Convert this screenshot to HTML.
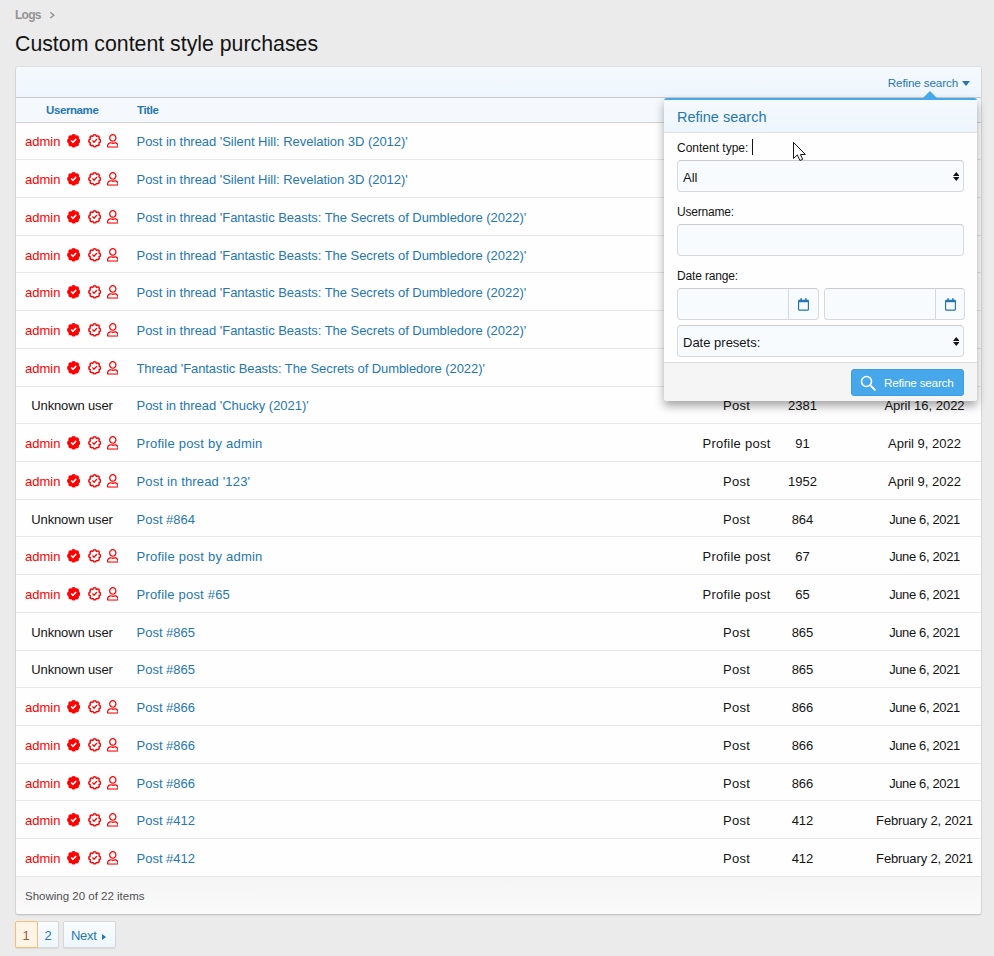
<!DOCTYPE html>
<html lang="en"><head><meta charset="utf-8"><title>Custom content style purchases</title>
<style>
*{box-sizing:border-box}
html,body{margin:0;padding:0}
body{width:994px;height:956px;overflow:hidden;background:#ebebeb;font-family:"Liberation Sans",sans-serif;font-size:14px;color:#141414;position:relative}
a{color:#2577b1;text-decoration:none}
.crumb{position:absolute;left:15px;top:7px;font-size:12px;font-weight:bold;color:#939393;line-height:16px;white-space:nowrap;letter-spacing:-.75px}
.crumb i{font-style:normal;font-weight:normal;margin-left:7px;font-size:13px}
h1{position:absolute;left:15px;top:29px;margin:0;font-size:21.3px;font-weight:normal;line-height:30px;white-space:nowrap;color:#141414}
.block{position:absolute;left:15px;top:66px;width:967px;height:849px;background:#fefefe;border:1px solid #d6d6d6;border-top-color:#dedede;border-bottom-color:#c8c8c8;border-radius:4px;overflow:hidden;box-shadow:0 1px 1px rgba(0,0,0,.07)}
.fbar{height:31px;background:linear-gradient(#f5f9fd,#edf6fd);border-bottom:1px solid #cbcbcb;position:relative}
.fbar a{position:absolute;right:11px;top:8px;font-size:11.7px;letter-spacing:-.15px;line-height:15px;white-space:nowrap}
.fbar a b{display:inline-block;width:0;height:0;border:4px solid transparent;border-top:5px solid #2577b1;border-bottom:0;margin-left:4px;vertical-align:1px}
.hdr{height:25px;background:#f5f9fd;border-bottom:1px solid #d2d2d2;position:relative;font-size:11.5px;font-weight:bold;color:#2577b1;line-height:24px;letter-spacing:-.4px}
.hdr span{position:absolute;top:0}
.rows{height:754px;display:flex;flex-direction:column}
.r{height:38px;display:flex;align-items:center;border-bottom:1px solid #e7e7e7;font-size:13px;white-space:nowrap;min-height:0}
.r:nth-child(1),.r:nth-child(4),.r:nth-child(8),.r:nth-child(11),.r:nth-child(15),.r:nth-child(18){height:37px}
.r:nth-child(4)>div,.r:nth-child(11)>div,.r:nth-child(18)>div{top:2px}
.r>div{line-height:18px;position:relative;top:1px}
.u{width:112px;text-align:center}
.u.a{color:#f00;text-align:left;padding-left:9px}
.ic{width:13.3px;height:13.8px;vertical-align:-2px}
.i1{margin-left:6.6px}.i2{margin-left:7.6px}.i3{margin-left:5.5px;width:11.6px}
.t{flex:1;padding-left:8.5px}
.c3{width:87px;text-align:center;letter-spacing:.25px}
.c4{width:45px;text-align:center}
.c5{width:156px;text-align:center;padding-left:43px}
.foot{height:37px;background:linear-gradient(#f5f5f5,#fafafa);font-size:11.5px;color:#505050;line-height:38px;padding-left:9px}
.pn{position:absolute;top:921px;height:27px;box-shadow:0 1px 1px rgba(0,0,0,.08);white-space:nowrap;border:1px solid #d8d8d8;border-radius:2px;background:linear-gradient(#fafcfe,#edf6fd);font-size:13px;line-height:27px;text-align:center;color:#2577b1}
.pn.cur{background:#fff4e5;border-color:#f5be75;color:#9a5a36;z-index:2}
.pn i{display:inline-block;width:0;height:0;border:3px solid transparent;border-left:4px solid #2577b1;border-right:0;margin-left:5.5px;vertical-align:0px}
.menu{position:absolute;left:664px;top:98px;width:313px;height:303px;background:#fefefe;border-top:2px solid #47a7eb;border-radius:3px;box-shadow:0 5px 10px 0 rgba(0,0,0,.35)}
.menu:before{content:"";position:absolute;left:259px;top:-9px;border:7px solid transparent;border-top:0;border-bottom:7px solid #47a7eb}
.mh{height:33px;background:linear-gradient(#f5f9fd,#edf6fd);border-bottom:1px solid #dfdfdf;color:#2577b1;font-size:14.5px;line-height:34px;padding-left:13px}
.lbl{position:absolute;left:13px;font-size:12px;line-height:16px;white-space:nowrap}
.inp{position:absolute;background:#f7fbfe;border:1px solid #d8d8d8;border-top-color:#cbcbcb;border-radius:4px;font-size:13px;line-height:30px;padding:2px 0 0 5px;overflow:hidden}
.inp svg.s{position:absolute;right:3.7px;top:10.5px;width:6.5px;height:9px}
.add{position:absolute;right:0;top:0;bottom:0;width:30px;border-left:1px solid #d8d8d8}
.add svg{position:absolute;left:9px;top:9px;width:11px;height:13px}
.mf{position:absolute;left:0;right:0;top:262px;height:39px;background:#f5f5f5;border-top:1px solid #dfdfdf;border-radius:0 0 3px 3px}
.btn{position:absolute;left:187px;top:6px;width:113px;height:27px;background:#47a7eb;border:1px solid #3b9de3;border-radius:3px;color:#fff;font-size:11.7px;letter-spacing:-.2px;line-height:25px;padding-left:32px;white-space:nowrap}
.btn svg{position:absolute;left:8px;top:5px;width:16px;height:16px}
</style></head><body>
<svg width="0" height="0" style="position:absolute"><defs>
<symbol id="bs" viewBox="0 0 512 512" preserveAspectRatio="none"><g fill="#f00"><circle cx="256" cy="256" r="180"/><circle cx="256.0" cy="88.0" r="88"/><circle cx="374.8" cy="137.2" r="88"/><circle cx="424.0" cy="256.0" r="88"/><circle cx="374.8" cy="374.8" r="88"/><circle cx="256.0" cy="424.0" r="88"/><circle cx="137.2" cy="374.8" r="88"/><circle cx="88.0" cy="256.0" r="88"/><circle cx="137.2" cy="137.2" r="88"/></g><path fill="#fff" d="M367.2 211.75L236.16 341.74c-4.31 4.28-11.28 4.25-15.55-.06l-75.72-76.33c-4.28-4.31-4.25-11.28.06-15.56l26.03-25.82c4.31-4.28 11.28-4.25 15.56.06l42.15 42.49 97.2-96.42c4.31-4.28 11.28-4.25 15.55.06l25.82 26.03c4.28 4.32 4.26 11.29-.06 15.56z"/></symbol>
<symbol id="br" viewBox="0 0 512 512" preserveAspectRatio="none"><g fill="#f00"><circle cx="256" cy="256" r="180"/><circle cx="256.0" cy="88.0" r="88"/><circle cx="374.8" cy="137.2" r="88"/><circle cx="424.0" cy="256.0" r="88"/><circle cx="374.8" cy="374.8" r="88"/><circle cx="256.0" cy="424.0" r="88"/><circle cx="137.2" cy="374.8" r="88"/><circle cx="88.0" cy="256.0" r="88"/><circle cx="137.2" cy="137.2" r="88"/></g><g fill="#fefefe"><circle cx="256" cy="256" r="154"/><circle cx="256.0" cy="100.0" r="41"/><circle cx="366.3" cy="145.7" r="41"/><circle cx="412.0" cy="256.0" r="41"/><circle cx="366.3" cy="366.3" r="41"/><circle cx="256.0" cy="412.0" r="41"/><circle cx="145.7" cy="366.3" r="41"/><circle cx="100.0" cy="256.0" r="41"/><circle cx="145.7" cy="145.7" r="41"/></g><path fill="#f00" transform="translate(256 256) scale(.88) translate(-256 -256)" d="M367.2 211.75L236.16 341.74c-4.31 4.28-11.28 4.25-15.55-.06l-75.72-76.33c-4.28-4.31-4.25-11.28.06-15.56l26.03-25.82c4.31-4.28 11.28-4.25 15.56.06l42.15 42.49 97.2-96.42c4.31-4.28 11.28-4.25 15.55.06l25.82 26.03c4.28 4.32 4.26 11.29-.06 15.56z"/></symbol>
<symbol id="ur" viewBox="0 0 448 512" preserveAspectRatio="none"><path fill="#f00" d="M313.6 304c-28.7 0-42.500 16-89.600 16-47.100 0-60.800-16-89.600-16C60.200 304 0 364.200 0 438.400V464c0 26.500 21.500 48 48 48h352c26.500 0 48-21.500 48-48v-25.600c0-74.200-60.200-134.400-134.400-134.400zM400 464H48v-25.600c0-47.600 38.800-86.400 86.400-86.400 14.600 0 38.300 16 89.600 16 51.700 0 74.900-16 89.600-16 47.600 0 86.400 38.800 86.400 86.400V464zM224 288c79.500 0 144-64.500 144-144S303.500 0 224 0 80 64.500 80 144s64.500 144 144 144zm0-240c52.900 0 96 43.100 96 96s-43.100 96-96 96-96-43.100-96-96 43.100-96 96-96z"/></symbol>
<symbol id="cal" viewBox="0 0 448 512"><path fill="#2577b1" d="M400 64h-48V12c0-6.600-5.400-12-12-12h-40c-6.600 0-12 5.400-12 12v52H160V12c0-6.600-5.400-12-12-12h-40c-6.600 0-12 5.400-12 12v52H48C21.500 64 0 85.500 0 112v352c0 26.500 21.500 48 48 48h352c26.500 0 48-21.500 48-48V112c0-26.500-21.500-48-48-48zm-6 400H54c-3.300 0-6-2.700-6-6V160h352v298c0 3.300-2.700 6-6 6z"/></symbol>
<symbol id="sort" viewBox="0 0 6.5 9"><path fill="#141414" d="M3.250 0L6.500 3.900H0zM0 5.100H6.500L3.250 9z"/></symbol>
</defs></svg>
<div class="crumb">Logs</div><svg style="position:absolute;left:48px;top:10px" width="8" height="10" viewBox="0 0 8 10"><path d="M2.200 2.200L5.900 5.150L2.200 8.100" fill="none" stroke="#909090" stroke-width="1.300"/></svg>
<h1>Custom content style purchases</h1>
<div class="block">
<div class="fbar"><a>Refine search<b></b></a></div>
<div class="hdr"><span style="left:30px">Username</span><span style="left:121px">Title</span></div>
<div class="rows">
<div class="r"><div class="u a"><span class="adm">admin</span><svg class="ic i1"><use href="#bs"/></svg><svg class="ic i2"><use href="#br"/></svg><svg class="ic i3"><use href="#ur"/></svg></div><div class="t"><a style="letter-spacing:-0.036px">Post in thread 'Silent Hill: Revelation 3D (2012)'</a></div><div class="c3"></div><div class="c4"></div><div class="c5"></div></div>
<div class="r"><div class="u a"><span class="adm">admin</span><svg class="ic i1"><use href="#bs"/></svg><svg class="ic i2"><use href="#br"/></svg><svg class="ic i3"><use href="#ur"/></svg></div><div class="t"><a style="letter-spacing:-0.036px">Post in thread 'Silent Hill: Revelation 3D (2012)'</a></div><div class="c3"></div><div class="c4"></div><div class="c5"></div></div>
<div class="r"><div class="u a"><span class="adm">admin</span><svg class="ic i1"><use href="#bs"/></svg><svg class="ic i2"><use href="#br"/></svg><svg class="ic i3"><use href="#ur"/></svg></div><div class="t"><a style="letter-spacing:-0.036px">Post in thread 'Fantastic Beasts: The Secrets of Dumbledore (2022)'</a></div><div class="c3"></div><div class="c4"></div><div class="c5"></div></div>
<div class="r"><div class="u a"><span class="adm">admin</span><svg class="ic i1"><use href="#bs"/></svg><svg class="ic i2"><use href="#br"/></svg><svg class="ic i3"><use href="#ur"/></svg></div><div class="t"><a style="letter-spacing:-0.036px">Post in thread 'Fantastic Beasts: The Secrets of Dumbledore (2022)'</a></div><div class="c3"></div><div class="c4"></div><div class="c5"></div></div>
<div class="r"><div class="u a"><span class="adm">admin</span><svg class="ic i1"><use href="#bs"/></svg><svg class="ic i2"><use href="#br"/></svg><svg class="ic i3"><use href="#ur"/></svg></div><div class="t"><a style="letter-spacing:-0.036px">Post in thread 'Fantastic Beasts: The Secrets of Dumbledore (2022)'</a></div><div class="c3"></div><div class="c4"></div><div class="c5"></div></div>
<div class="r"><div class="u a"><span class="adm">admin</span><svg class="ic i1"><use href="#bs"/></svg><svg class="ic i2"><use href="#br"/></svg><svg class="ic i3"><use href="#ur"/></svg></div><div class="t"><a style="letter-spacing:-0.036px">Post in thread 'Fantastic Beasts: The Secrets of Dumbledore (2022)'</a></div><div class="c3"></div><div class="c4"></div><div class="c5"></div></div>
<div class="r"><div class="u a"><span class="adm">admin</span><svg class="ic i1"><use href="#bs"/></svg><svg class="ic i2"><use href="#br"/></svg><svg class="ic i3"><use href="#ur"/></svg></div><div class="t"><a style="letter-spacing:-0.08px">Thread 'Fantastic Beasts: The Secrets of Dumbledore (2022)'</a></div><div class="c3"></div><div class="c4"></div><div class="c5"></div></div>
<div class="r"><div class="u"><span style="letter-spacing:-.15px">Unknown user</span></div><div class="t"><a style="letter-spacing:-0.04px">Post in thread 'Chucky (2021)'</a></div><div class="c3">Post</div><div class="c4">2381</div><div class="c5">April 16, 2022</div></div>
<div class="r"><div class="u a"><span class="adm">admin</span><svg class="ic i1"><use href="#bs"/></svg><svg class="ic i2"><use href="#br"/></svg><svg class="ic i3"><use href="#ur"/></svg></div><div class="t"><a style="letter-spacing:0.22px">Profile post by admin</a></div><div class="c3">Profile post</div><div class="c4">91</div><div class="c5">April 9, 2022</div></div>
<div class="r"><div class="u a"><span class="adm">admin</span><svg class="ic i1"><use href="#bs"/></svg><svg class="ic i2"><use href="#br"/></svg><svg class="ic i3"><use href="#ur"/></svg></div><div class="t"><a style="letter-spacing:0.16px">Post in thread '123'</a></div><div class="c3">Post</div><div class="c4">1952</div><div class="c5">April 9, 2022</div></div>
<div class="r"><div class="u"><span style="letter-spacing:-.15px">Unknown user</span></div><div class="t"><a>Post #864</a></div><div class="c3">Post</div><div class="c4">864</div><div class="c5" style="letter-spacing:-0.37px">June 6, 2021</div></div>
<div class="r"><div class="u a"><span class="adm">admin</span><svg class="ic i1"><use href="#bs"/></svg><svg class="ic i2"><use href="#br"/></svg><svg class="ic i3"><use href="#ur"/></svg></div><div class="t"><a style="letter-spacing:0.22px">Profile post by admin</a></div><div class="c3">Profile post</div><div class="c4">67</div><div class="c5" style="letter-spacing:-0.37px">June 6, 2021</div></div>
<div class="r"><div class="u a"><span class="adm">admin</span><svg class="ic i1"><use href="#bs"/></svg><svg class="ic i2"><use href="#br"/></svg><svg class="ic i3"><use href="#ur"/></svg></div><div class="t"><a style="letter-spacing:0.2px">Profile post #65</a></div><div class="c3">Profile post</div><div class="c4">65</div><div class="c5" style="letter-spacing:-0.37px">June 6, 2021</div></div>
<div class="r"><div class="u"><span style="letter-spacing:-.15px">Unknown user</span></div><div class="t"><a>Post #865</a></div><div class="c3">Post</div><div class="c4">865</div><div class="c5" style="letter-spacing:-0.37px">June 6, 2021</div></div>
<div class="r"><div class="u"><span style="letter-spacing:-.15px">Unknown user</span></div><div class="t"><a>Post #865</a></div><div class="c3">Post</div><div class="c4">865</div><div class="c5" style="letter-spacing:-0.37px">June 6, 2021</div></div>
<div class="r"><div class="u a"><span class="adm">admin</span><svg class="ic i1"><use href="#bs"/></svg><svg class="ic i2"><use href="#br"/></svg><svg class="ic i3"><use href="#ur"/></svg></div><div class="t"><a>Post #866</a></div><div class="c3">Post</div><div class="c4">866</div><div class="c5" style="letter-spacing:-0.37px">June 6, 2021</div></div>
<div class="r"><div class="u a"><span class="adm">admin</span><svg class="ic i1"><use href="#bs"/></svg><svg class="ic i2"><use href="#br"/></svg><svg class="ic i3"><use href="#ur"/></svg></div><div class="t"><a>Post #866</a></div><div class="c3">Post</div><div class="c4">866</div><div class="c5" style="letter-spacing:-0.37px">June 6, 2021</div></div>
<div class="r"><div class="u a"><span class="adm">admin</span><svg class="ic i1"><use href="#bs"/></svg><svg class="ic i2"><use href="#br"/></svg><svg class="ic i3"><use href="#ur"/></svg></div><div class="t"><a>Post #866</a></div><div class="c3">Post</div><div class="c4">866</div><div class="c5" style="letter-spacing:-0.37px">June 6, 2021</div></div>
<div class="r"><div class="u a"><span class="adm">admin</span><svg class="ic i1"><use href="#bs"/></svg><svg class="ic i2"><use href="#br"/></svg><svg class="ic i3"><use href="#ur"/></svg></div><div class="t"><a>Post #412</a></div><div class="c3">Post</div><div class="c4">412</div><div class="c5" style="letter-spacing:-0.14px">February 2, 2021</div></div>
<div class="r"><div class="u a"><span class="adm">admin</span><svg class="ic i1"><use href="#bs"/></svg><svg class="ic i2"><use href="#br"/></svg><svg class="ic i3"><use href="#ur"/></svg></div><div class="t"><a>Post #412</a></div><div class="c3">Post</div><div class="c4">412</div><div class="c5" style="letter-spacing:-0.14px">February 2, 2021</div></div>
</div>
<div class="foot">Showing 20 of 22 items</div>
</div>
<div class="pn cur" style="left:15px;width:23px;padding-right:1px">1</div>
<div class="pn" style="left:37px;width:22px;border-radius:0 2px 2px 0">2</div>
<div class="pn" style="left:63px;width:53px;text-align:left;padding-left:7px"><span style="letter-spacing:-.3px">Next</span><i></i></div>
<div class="menu">
<div class="mh">Refine search</div>
<div class="lbl" style="top:40px">Content type:</div>
<div style="position:absolute;left:88px;top:39px;width:1px;height:16px;background:#141414"></div>
<div class="inp" style="left:13px;top:60px;width:287px;height:32px">All<svg class="s"><use href="#sort"/></svg></div>
<div class="lbl" style="top:104px;letter-spacing:-.2px">Username:</div>
<div class="inp" style="left:13px;top:124px;width:287px;height:32px"></div>
<div class="lbl" style="top:168px;letter-spacing:-.15px">Date range:</div>
<div class="inp" style="left:13px;top:188px;width:142px;height:32px"><div class="add"><svg><use href="#cal"/></svg></div></div>
<div class="inp" style="left:160px;top:188px;width:141px;height:32px"><div class="add" style="width:29px"><svg><use href="#cal"/></svg></div></div>
<div class="inp" style="left:13px;top:225px;width:287px;height:32px;letter-spacing:0">Date presets:<svg class="s"><use href="#sort"/></svg></div>
<div class="mf"><div class="btn"><svg viewBox="0 0 16 16"><circle cx="6.500" cy="6.500" r="5" fill="none" stroke="#fff" stroke-width="1.600"/><path d="M10.200 10.200L14.800 14.800" stroke="#fff" stroke-width="1.900" stroke-linecap="round"/></svg>Refine search</div></div>
</div>
<svg style="position:absolute;left:785px;top:135px" width="30" height="30" viewBox="0 0 30 30"><path d="M8.500 7.400V23.500L12.400 19.900L14.900 25.500L17.700 24.300L15.400 19.500H20.400Z" fill="#fff" stroke="#15151f" stroke-width="1" stroke-linejoin="round"/></svg>
</body></html>
